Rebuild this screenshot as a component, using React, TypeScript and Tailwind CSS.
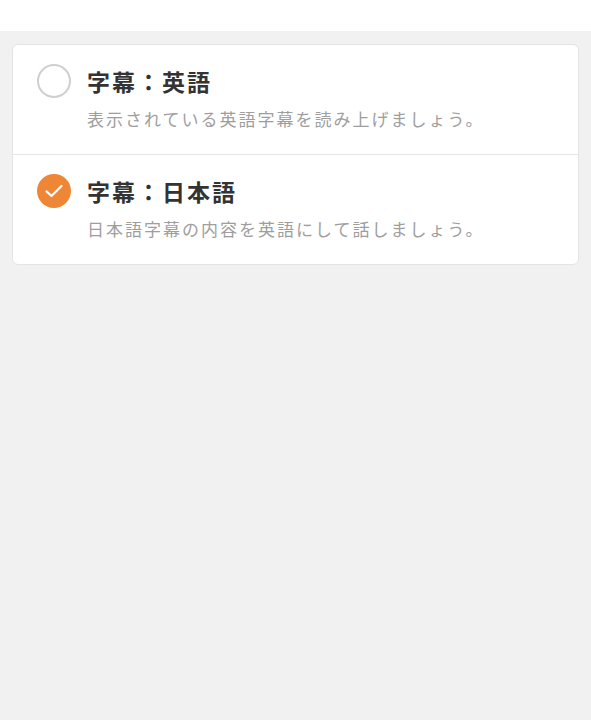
import React, { useState } from 'react';

type Option = {
  id: string;
  title: string;
  description: string;
};

const options: Option[] = [
  { id: 'en', title: '字幕：英語', description: '表示されている英語字幕を読み上げましょう。' },
  { id: 'ja', title: '字幕：日本語', description: '日本語字幕の内容を英語にして話しましょう。' }
];

const font = { fontFamily: '"Noto Sans CJK JP", "Noto Sans", sans-serif' };

const App = () => {
  const [selected, setSelected] = useState('ja');

  return (
    <div className="min-h-[720px] w-full bg-[#f1f1f1]" style={font}>
      <div className="h-[31px] bg-white" />
      <div className="px-3 pt-[13px]">
        <div className="overflow-hidden rounded-md border border-[#e4e4e4] bg-white">
          {options.map((opt, index) => {
            const checked = selected === opt.id;
            return (
              <button
                key={opt.id}
                type="button"
                onClick={() => setSelected(opt.id)}
                className={`${index > 0 ? 'border-t border-[#e4e4e4]' : ''} flex w-full flex-col pl-6 pr-4 pt-5 pb-[23px] text-left`}
              >
                <div className="flex h-8 items-center gap-4">
                  {checked ? (
                    <span className="flex h-[34px] w-[34px] shrink-0 items-center justify-center rounded-full bg-[#ef8636]">
                      <svg width="20" height="16" viewBox="0 0 20 16" fill="none">
                        <path d="M2.5 8.4l5 4.6L17.5 3" stroke="#fff" strokeWidth="2.2" strokeLinecap="round" strokeLinejoin="round" />
                      </svg>
                    </span>
                  ) : (
                    <span className="h-[34px] w-[34px] shrink-0 rounded-full border-2 border-[#cfcfcf]" />
                  )}
                  <span className="text-[23px] font-semibold leading-8 tracking-[2px] text-[#333333]">{opt.title}</span>
                </div>
                <p className="mt-[10px] pl-[50px] text-[17px] leading-6 tracking-[2px] text-[#9e9e9e]">{opt.description}</p>
              </button>
            );
          })}
        </div>
      </div>
    </div>
  );
};

export default App;
